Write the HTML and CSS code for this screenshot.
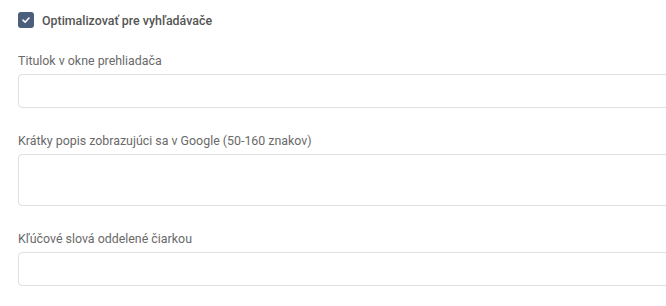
FILE: index.html
```html
<!DOCTYPE html>
<html lang="sk">
  <head>
    <meta charset="UTF-8" />
    <meta name="viewport" content="width=device-width, initial-scale=1.0" />
    <title>SEO nastavenia</title>
    <link rel="stylesheet" href="styles.css">
  </head>

  <body>
    <div class="seo-form">
      <label class="check-row">
        <span class="check-box">
          <svg width="10" height="10" viewBox="0 0 10 10">
            <path d="M2 5.2 L4.1 7.2 L8 3" fill="none" stroke="#fff" stroke-width="1.6" stroke-linecap="round" stroke-linejoin="round" />
          </svg>
        </span>
        <span class="check-label">Optimalizovať pre vyhľadávače</span>
      </label>

      <div class="field">
        <label for="seoTitle">Titulok v okne prehliadača</label>
        <input type="text" id="seoTitle" />
      </div>

      <div class="field">
        <label for="seoDesc">Krátky popis zobrazujúci sa v Google (50-160 znakov)</label>
        <textarea id="seoDesc"></textarea>
      </div>

      <div class="field">
        <label for="seoKeys">Kľúčové slová oddelené čiarkou</label>
        <input type="text" id="seoKeys" />
      </div>
    </div>
  </body>
</html>
```

FILE: styles.css
```css
html,
body {
  margin: 0;
  overflow: hidden;
  background: #fff;
}

body {
  font-family: Roboto, Arial, sans-serif;
  font-size: 12.4px;
  color: #6a6a6a;
  padding: 12px 0 0 18px;
}

.seo-form {
  width: 670px;
}

.check-row {
  display: flex;
  align-items: center;
  gap: 8px;
  height: 16px;
  margin-bottom: 23px;
}

.check-box {
  width: 16px;
  height: 16px;
  border-radius: 3px;
  background-color: #4b5e7c;
  display: flex;
  align-items: center;
  justify-content: center;
}

.check-label {
  font-weight: 500;
  color: #555;
}

.field {
  margin-bottom: 23px;
}

.field label {
  display: block;
  line-height: 20px;
  margin-bottom: 3px;
}

.field input,
.field textarea {
  display: block;
  box-sizing: border-box;
  width: 100%;
  height: 34px;
  border: 1px solid #e1e1e1;
  border-radius: 4px;
  background: #fff;
  font-family: inherit;
  font-size: 13px;
  padding: 6px 10px;
  resize: none;
}

.field textarea {
  height: 52px;
}
```
